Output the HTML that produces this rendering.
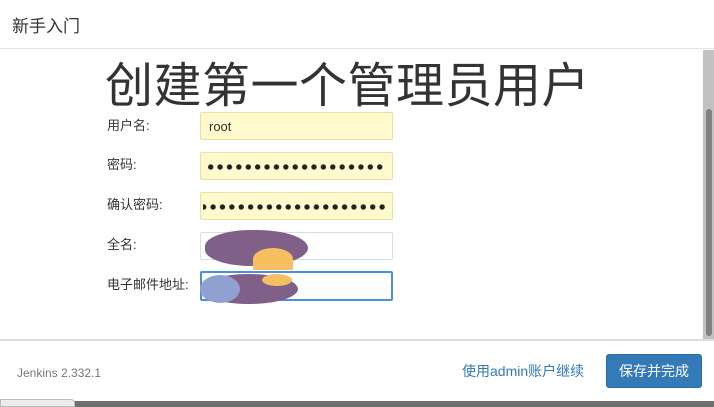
<!DOCTYPE html>
<html><head><meta charset="utf-8"><style>
*{margin:0;padding:0;box-sizing:border-box}
body{width:714px;height:407px;overflow:hidden;background:#fff;font-family:"Liberation Sans","Noto Sans CJK SC",sans-serif;position:relative;color:#333}
.hdr{position:absolute;left:0;top:0;width:714px;height:49px;border-bottom:1px solid #e5e5e5}
.hdr span{position:absolute;left:12px;top:12px;font-size:17px;color:#333}
h1{position:absolute;left:105px;top:46px;font-size:48px;font-weight:normal;color:#333;letter-spacing:0.5px;white-space:nowrap;font-family:"Noto Sans CJK SC",sans-serif}
.lbl{position:absolute;left:107px;font-size:13px;color:#333}
.in{position:absolute;left:200px;width:193px;height:28px;border:1px solid #f0dfa0;background:#fffacd;border-radius:2px;overflow:hidden}
.dots{position:absolute;top:0;bottom:0;left:5px;right:9px;background-image:radial-gradient(circle,#222 2.4px,transparent 2.9px);background-size:9.4px 28px;background-repeat:repeat-x}
.sb{position:absolute;left:703px;top:50px;width:11px;height:289px;background:#c1c1c1}
.th{position:absolute;left:706px;top:109px;width:6px;height:227px;background:#808080;border-radius:3px}
.ft{position:absolute;left:0;top:339px;width:714px;height:62px;border-top:2px solid #ddd}
.btn{position:absolute;left:606px;top:354px;width:96px;height:34px;background:#337ab7;border:1px solid #2e6da4;border-radius:3px;color:#fff;font-size:14px;text-align:center;line-height:32px}
.blob{position:absolute;border-radius:50%}
</style></head><body>
<div class="hdr"><span>新手入门</span></div>
<h1>创建第一个管理员用户</h1>
<div class="lbl" style="top:115px">用户名:</div>
<div class="lbl" style="top:154px">密码:</div>
<div class="lbl" style="top:194px">确认密码:</div>
<div class="lbl" style="top:234px">全名:</div>
<div class="lbl" style="top:274px">电子邮件地址:</div>
<div class="in" style="top:112px"><span style="position:absolute;left:8px;top:6px;font-size:13px;color:#333">root</span></div>
<div class="in" style="top:152px"><div class="dots" style="background-position:0 0"></div></div>
<div class="in" style="top:192px"><div class="dots" style="left:2px;right:6px;background-position:-4px 0"></div></div>
<div class="in" style="top:232px;background:#fff;border-color:#ddd"></div>
<div class="in" style="top:271px;height:30px;background:#fff;border:2px solid #4a90d9"></div>
<div class="blob" style="left:205px;top:230px;width:103px;height:36px;background:#806088;border-radius:45% 50% 50% 45%"></div>
<div class="blob" style="left:253px;top:248px;width:40px;height:22px;background:#f4c060;border-radius:50% 50% 0 0"></div>
<div class="blob" style="left:200px;top:274px;width:98px;height:30px;background:#806088"></div>
<div class="blob" style="left:200px;top:275px;width:40px;height:28px;background:#90a0d0"></div>
<div class="blob" style="left:262px;top:274px;width:30px;height:12px;background:#f4c060"></div>
<div class="sb"></div><div class="th"></div>
<div class="ft">
<span style="position:absolute;left:17px;top:25px;font-size:12px;color:#777">Jenkins 2.332.1</span>
<span style="position:absolute;left:462px;top:20px;font-size:14px;color:#337ab7">使用admin账户继续</span>
</div>
<div class="btn">保存并完成</div>
<div style="position:absolute;left:0;top:401px;width:714px;height:6px;background:#6e6e6e"></div>
<div style="position:absolute;left:0;top:399px;width:75px;height:8px;background:#ececec;border:1px solid #bbb;border-radius:0 4px 0 0"></div>
</body></html>
